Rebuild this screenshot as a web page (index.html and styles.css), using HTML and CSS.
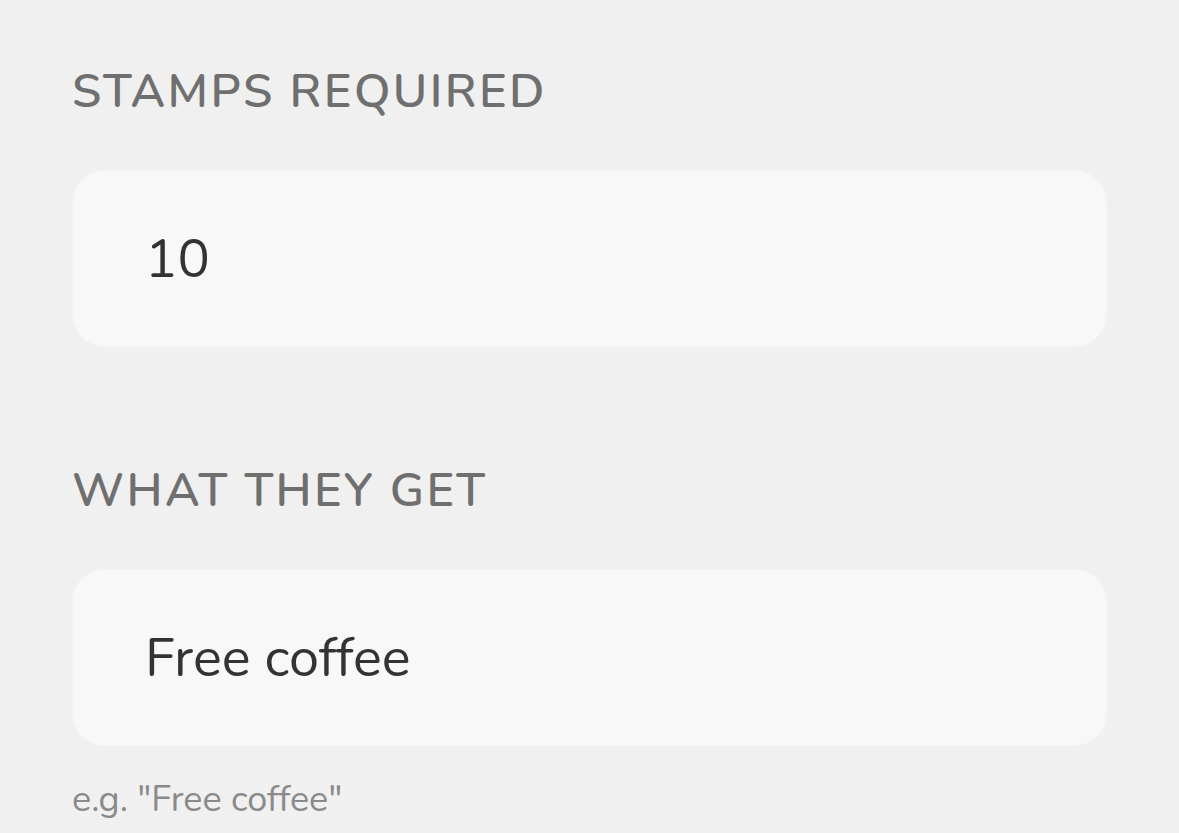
FILE: index.html
```html
<!DOCTYPE html>
<html>
<head>
<meta charset="utf-8">
<link rel="stylesheet" href="styles.css">
</head>
<body>
<main class="form">
  <section class="field">
    <div class="label">STAMPS REQUIRED</div>
    <div class="input">10</div>
  </section>
  <section class="field">
    <div class="label">WHAT THEY GET</div>
    <div class="input">Free coffee</div>
    <div class="hint">e.g. "Free coffee"</div>
  </section>
</main>
</body>
</html>
```
FILE: styles.css
```css
html, body {
  margin: 0;
  padding: 0;
  background: #f0f0f0;
}
body {
  font-family: "Nunito", "Open Sans", "Noto Sans", sans-serif;
}
.form {
  padding: 60px 72px 0 72px;
  display: flex;
  flex-direction: column;
  gap: 112px;
}
.field {
  display: flex;
  flex-direction: column;
}
.label {
  font-size: 47px;
  font-weight: 600;
  line-height: 64px;
  letter-spacing: 0.052em;
  color: #6f6f6f;
  margin-bottom: 46px;
}
.input {
  height: 177px;
  box-sizing: border-box;
  background: #f8f8f8;
  border: 1px solid #f4f4f4;
  border-radius: 32px;
  padding: 0 72px;
  display: flex;
  align-items: center;
  font-size: 54px;
  color: #333333;
  width: 1035px;
}
.hint {
  margin-top: 29px;
  font-size: 36px;
  color: #8a8a8a;
}
```
